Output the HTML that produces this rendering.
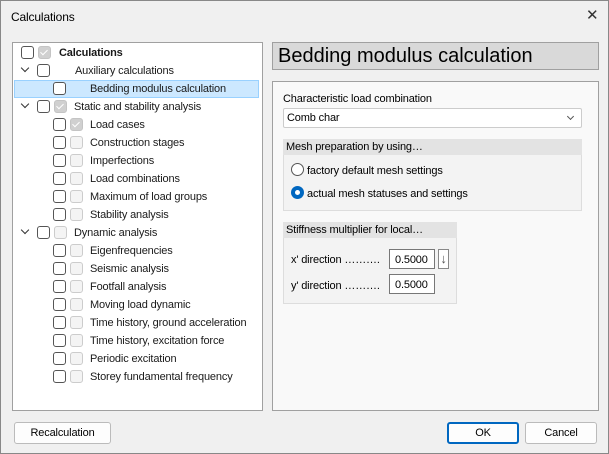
<!DOCTYPE html><html><head><style>
*{box-sizing:border-box}
body{margin:0;width:609px;height:454px;background:#f0f0f0;font-family:"Liberation Sans",sans-serif;font-size:11px;letter-spacing:-0.15px;color:#000;position:relative;overflow:hidden;border:1px solid #888}
.a{position:absolute;white-space:nowrap}
.cb{position:absolute;width:13px;height:13px;border:1px solid #555;border-radius:3px;background:#fff}
.cg{position:absolute;width:13px;height:13px;border:1px solid #ccc;border-radius:3px;background:#f4f4f4}
.cg.k{background:#d0d0d0;border-color:#c4c4c4}
.cg.k:after{content:"";position:absolute;left:3px;top:1px;width:3px;height:6px;border:solid #fff;border-width:0 1.5px 1.5px 0;transform:rotate(45deg)}
.t{position:absolute;font-size:11px;color:#1a1a1a;white-space:nowrap;margin-top:1px}
.chev{position:absolute;width:6px;height:6px;border:solid #333;border-width:0 1.3px 1.3px 0;transform:rotate(45deg)}
.btn{position:absolute;height:22px;border:1px solid #bbb;background:#fdfdfd;border-radius:3px;text-align:center;line-height:20px}
.m{margin-top:2px}
</style></head><body>
<div class="a" style="left:10px;top:9px;font-size:12px">Calculations</div>
<div class="a" style="left:585px;top:5px;font-size:15px;color:#333">✕</div>
<div class="a" style="left:11px;top:41px;width:251px;height:369px;background:#fff;border:1px solid #a0a0a0"></div>
<div class="a" style="left:13px;top:79px;width:245px;height:18px;background:#cce8ff;border:1px solid #99d1ff"></div>
<div class="cb" style="left:20px;top:45px"></div><div class="cg k" style="left:37px;top:45px"></div><div class="t" style="left:58px;top:45px;font-weight:bold">Calculations</div>
<div class="chev" style="left:21px;top:64px"></div><div class="cb" style="left:36px;top:63px"></div><div class="t" style="left:74px;top:63px">Auxiliary calculations</div>
<div class="cb" style="left:52px;top:81px"></div><div class="t" style="left:89px;top:81px">Bedding modulus calculation</div>
<div class="chev" style="left:21px;top:100px"></div><div class="cb" style="left:36px;top:99px"></div><div class="cg k" style="left:53px;top:99px"></div><div class="t" style="left:73px;top:99px">Static and stability analysis</div>
<div class="cb" style="left:52px;top:117px"></div><div class="cg k" style="left:69px;top:117px"></div><div class="t" style="left:89px;top:117px">Load cases</div>
<div class="cb" style="left:52px;top:135px"></div><div class="cg" style="left:69px;top:135px"></div><div class="t" style="left:89px;top:135px">Construction stages</div>
<div class="cb" style="left:52px;top:153px"></div><div class="cg" style="left:69px;top:153px"></div><div class="t" style="left:89px;top:153px">Imperfections</div>
<div class="cb" style="left:52px;top:171px"></div><div class="cg" style="left:69px;top:171px"></div><div class="t" style="left:89px;top:171px">Load combinations</div>
<div class="cb" style="left:52px;top:189px"></div><div class="cg" style="left:69px;top:189px"></div><div class="t" style="left:89px;top:189px">Maximum of load groups</div>
<div class="cb" style="left:52px;top:207px"></div><div class="cg" style="left:69px;top:207px"></div><div class="t" style="left:89px;top:207px">Stability analysis</div>
<div class="chev" style="left:21px;top:226px"></div><div class="cb" style="left:36px;top:225px"></div><div class="cg" style="left:53px;top:225px"></div><div class="t" style="left:73px;top:225px">Dynamic analysis</div>
<div class="cb" style="left:52px;top:243px"></div><div class="cg" style="left:69px;top:243px"></div><div class="t" style="left:89px;top:243px">Eigenfrequencies</div>
<div class="cb" style="left:52px;top:261px"></div><div class="cg" style="left:69px;top:261px"></div><div class="t" style="left:89px;top:261px">Seismic analysis</div>
<div class="cb" style="left:52px;top:279px"></div><div class="cg" style="left:69px;top:279px"></div><div class="t" style="left:89px;top:279px">Footfall analysis</div>
<div class="cb" style="left:52px;top:297px"></div><div class="cg" style="left:69px;top:297px"></div><div class="t" style="left:89px;top:297px">Moving load dynamic</div>
<div class="cb" style="left:52px;top:315px"></div><div class="cg" style="left:69px;top:315px"></div><div class="t" style="left:89px;top:315px">Time history, ground acceleration</div>
<div class="cb" style="left:52px;top:333px"></div><div class="cg" style="left:69px;top:333px"></div><div class="t" style="left:89px;top:333px">Time history, excitation force</div>
<div class="cb" style="left:52px;top:351px"></div><div class="cg" style="left:69px;top:351px"></div><div class="t" style="left:89px;top:351px">Periodic excitation</div>
<div class="cb" style="left:52px;top:369px"></div><div class="cg" style="left:69px;top:369px"></div><div class="t" style="left:89px;top:369px">Storey fundamental frequency</div>

<div class="a" style="left:271px;top:41px;width:327px;height:28px;background:#d9d9d9;border:1px solid #a0a0a0;font-size:20px;letter-spacing:0;padding:2px 0 0 5px;line-height:22px">Bedding modulus calculation</div>
<div class="a" style="left:271px;top:80px;width:327px;height:330px;background:#f9f9f9;border:1px solid #a0a0a0"></div>
<div class="a" style="left:282px;top:92px">Characteristic load combination</div>
<div class="a" style="left:282px;top:107px;width:299px;height:20px;background:#fff;border:1px solid #ccc;border-radius:2px;padding:3px 0 0 3px">Comb char</div>
<div class="chev" style="left:567px;top:113px;width:5px;height:5px;border-color:#555;border-width:0 1px 1px 0"></div>
<div class="a" style="left:282px;top:138px;width:299px;height:72px;border:1px solid #ddd;background:#f3f3f3"></div>
<div class="a" style="left:282px;top:138px;width:299px;height:16px;background:#e3e3e3;padding:2px 0 0 3px">Mesh preparation by using…</div>
<div class="a" style="left:290px;top:162px;width:13px;height:13px;border:1px solid #555;border-radius:50%;background:#fff"></div>
<div class="a m" style="left:306px;top:162px">factory default mesh settings</div>
<div class="a" style="left:290px;top:185px;width:13px;height:13px;border-radius:50%;background:#0067c0"></div>
<div class="a" style="left:294px;top:189px;width:5px;height:5px;border-radius:50%;background:#fff"></div>
<div class="a m" style="left:306px;top:185px">actual mesh statuses and settings</div>
<div class="a" style="left:282px;top:221px;width:174px;height:82px;border:1px solid #ddd;background:#f3f3f3"></div>
<div class="a" style="left:282px;top:221px;width:174px;height:16px;background:#e3e3e3;padding:2px 0 0 3px">Stiffness multiplier for local…</div>
<div class="a m" style="left:290px;top:251px">x' direction ……….</div>
<div class="a" style="left:388px;top:248px;width:46px;height:20px;border:1px solid #777;background:#fff;padding:4px 0 0 5px">0.5000</div>
<div class="a" style="left:437px;top:248px;width:11px;height:20px;border:1px solid #888;background:#fff;text-align:center;line-height:18px;font-size:13px;color:#555">↓</div>
<div class="a m" style="left:290px;top:277px">y' direction ……….</div>
<div class="a" style="left:388px;top:273px;width:46px;height:20px;border:1px solid #777;background:#fff;padding:4px 0 0 5px">0.5000</div>

<div class="btn" style="left:13px;top:421px;width:97px;line-height:21px">Recalculation</div>
<div class="btn" style="left:446px;top:421px;width:72px;border:2px solid #0067c0;line-height:19px">OK</div>
<div class="btn" style="left:524px;top:421px;width:72px;line-height:21px">Cancel</div>
</body></html>
